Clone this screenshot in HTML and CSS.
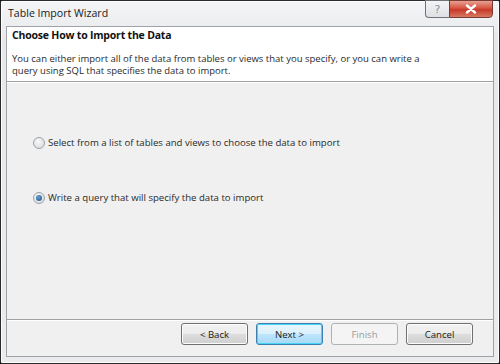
FILE: index.html
```html
<!DOCTYPE html>
<html>
<head>
<meta charset="utf-8">
<link rel="stylesheet" href="styles.css">
</head>
<body>
<div class="window">
  <div class="titlebar">
    <span class="title">Table Import Wizard</span>
    <div class="caption-buttons">
      <div class="cap-btn help">?</div>
      <div class="cap-btn close">
        <svg width="12" height="10" viewBox="0 0 12 10"><path d="M2 1.5 L10 8.5 M10 1.5 L2 8.5" stroke="#fff" stroke-width="2.4" stroke-linecap="round"/></svg>
      </div>
    </div>
  </div>
  <div class="panel">
    <div class="header">
      <div class="heading">Choose How to Import the Data</div>
      <div class="desc">You can either import all of the data from tables or views that you specify, or you can write a query using SQL that specifies the data to import.</div>
    </div>
    <div class="body">
      <label class="option"><span class="radio"></span><span>Select from a list of tables and views to choose the data to import</span></label>
      <label class="option"><span class="radio checked"></span><span>Write a query that will specify the data to import</span></label>
    </div>
    <div class="footer">
      <div class="btn">&lt; Back</div>
      <div class="btn default">Next &gt;</div>
      <div class="btn disabled">Finish</div>
      <div class="btn">Cancel</div>
    </div>
  </div>
</div>
</body>
</html>
```
FILE: styles.css
```css
* { box-sizing: border-box; }
html, body { margin: 0; padding: 0; }
body {
  width: 500px;
  height: 364px;
  background: #111;
  font-family: "Open Sans", "Noto Sans", sans-serif;
  color: #1e1e1e;
  overflow: hidden;
}
.window {
  width: 500px;
  height: 364px;
  border: 1px solid #2a2a2a;
  border-radius: 2px;
  background: linear-gradient(#f4f5f6, #e6e8ea 40px, #e9ebed);
  display: flex;
  flex-direction: column;
  box-shadow: inset 0 0 0 1px #fdfdfd;
}
.titlebar {
  height: 25px;
  display: flex;
  align-items: flex-start;
  justify-content: space-between;
  padding-left: 7px;
  padding-right: 6px;
}
.title {
  font-size: 10.6px;
  line-height: 14px;
  margin-top: 5px;
  color: #1a1a1a;
}
.caption-buttons {
  display: flex;
  margin-top: -1px;
}
.cap-btn {
  height: 18px;
  border: 1px solid #6f7378;
  display: flex;
  align-items: center;
  justify-content: center;
}
.help {
  width: 24px;
  border-radius: 0 0 0 4px;
  border-right: none;
  background: linear-gradient(#f3f4f6, #dde0e4);
  color: #8a9098;
  font-size: 11px;
  font-family: "DejaVu Sans", sans-serif;
}
.close {
  width: 44px;
  border-radius: 0 0 4px 0;
  border-color: #7a3a34;
  background: linear-gradient(#e8a093, #d5543f 45%, #c7382a 55%, #d77a60);
}
.panel {
  flex: 1;
  margin: 0 5px 6px 5px;
  border: 1px solid #9fa3a7;
  display: flex;
  flex-direction: column;
  background: #f0f0f0;
}
.header {
  background: #fff;
  height: 55px;
  border-bottom: 1px solid #a0a0a0;
  padding: 1px 5px 0 5px;
  box-shadow: 0 1px 0 #fff;
}
.heading {
  font-weight: bold;
  font-size: 10.5px;
  line-height: 14px;
  color: #111;
  letter-spacing: -0.2px;
}
.desc {
  margin-top: 11px;
  font-size: 9.5px;
  line-height: 12px;
  color: #2a2a2a;
  width: 428px;
}
.body {
  flex: 1;
  display: flex;
  flex-direction: column;
  gap: 42px;
  padding: 54px 0 0 26px;
}
.option {
  display: flex;
  align-items: center;
  gap: 3px;
  height: 13px;
  font-size: 9.6px;
  color: #2a2a2a;
}
.radio {
  width: 12px;
  height: 12px;
  border-radius: 50%;
  border: 1px solid #9ba2a8;
  background: radial-gradient(circle at 40% 35%, #f8f8f8, #d4d7da);
  display: flex;
  align-items: center;
  justify-content: center;
}
.radio.checked::after {
  content: "";
  width: 6px;
  height: 6px;
  border-radius: 50%;
  background: radial-gradient(circle at 40% 35%, #6aa0d0, #1d4f8a);
}
.footer {
  height: 37px;
  border-top: 1px solid #a0a0a0;
  box-shadow: inset 0 1px 0 #fff;
  display: flex;
  justify-content: flex-end;
  align-items: flex-start;
  gap: 8px;
  padding: 3px 20px 0 0;
}
.btn {
  width: 67px;
  height: 22px;
  border: 1px solid #707070;
  border-radius: 3px;
  background: linear-gradient(#f2f2f2, #ebebeb 50%, #dddddd 50%, #cfcfcf);
  box-shadow: inset 0 0 0 1px #fcfcfc;
  display: flex;
  align-items: center;
  justify-content: center;
  font-size: 9.6px;
  color: #1a1a1a;
}
.btn.default {
  border-color: #3c7fb1;
  background: linear-gradient(#eaf6fd, #d9f0fc 50%, #bee6fd 50%, #a7d9f5);
  box-shadow: inset 0 0 0 1px #48d5fb;
}
.btn.disabled {
  border-color: #adb2b5;
  background: #f4f4f4;
  box-shadow: none;
  color: #9a9a9a;
}
```
